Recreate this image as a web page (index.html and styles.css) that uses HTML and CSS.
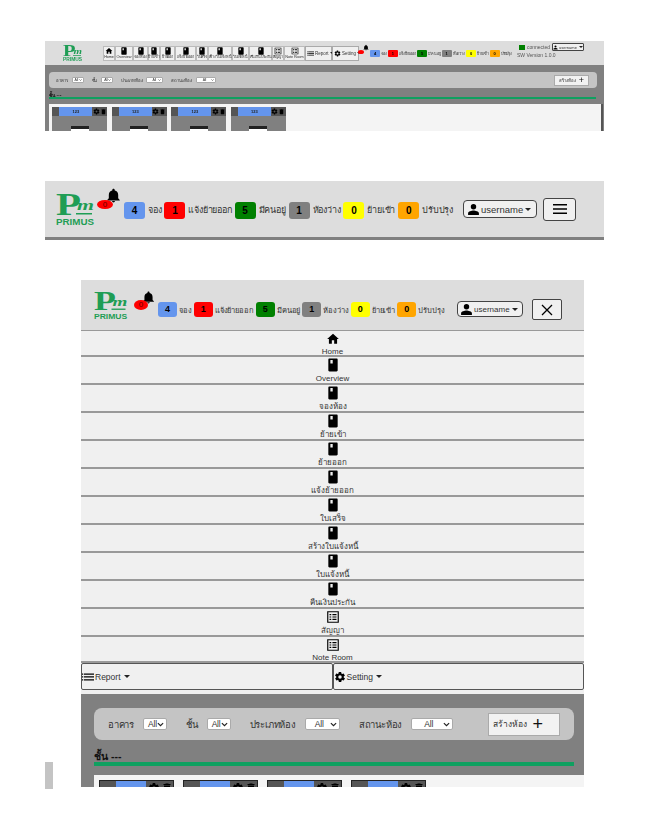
FILE: index.html
```html
<!DOCTYPE html>
<html lang="en">
<head>
    <meta charset="UTF-8">
    <meta name="viewport" content="width=device-width, initial-scale=1.0">
    <title>Primus manual</title>
    <link rel="stylesheet" href="styles.css">
</head>
<body>
    <svg class="defs" width="0" height="0">
        <symbol id="i-home" viewBox="0 0 24 24"><path d="M10 20v-6h4v6h5v-8h3L12 3 2 12h3v8z"/></symbol>
        <symbol id="i-book" viewBox="0 0 24 24"><path fill-rule="evenodd" d="M6 1h12c1.400 0 2 .8 2 2v18c0 1.200-.6 2-2 2H6c-1.400 0-2-.8-2-2V3c0-1.200.6-2 2-2zm1.500 2.500v6h4v-6z"/></symbol>
        <symbol id="i-list" viewBox="0 0 24 24"><path fill-rule="evenodd" d="M2 2h20v20H2zm2 2v16h16V4zm2 3h3v2H6zm5 0h7v2h-7zm-5 4h3v2H6zm5 0h7v2h-7zm-5 4h3v2H6zm5 0h7v2h-7z"/></symbol>
        <symbol id="i-menu" viewBox="0 0 24 24"><path d="M0 5h2.500v2.500H0zm4 0h20v2.500H4zm-4 5.700h2.500v2.500H0zm4 0h20v2.500H4zm-4 5.800h2.500V19H0zm4 0h20V19H4z"/></symbol>
        <symbol id="i-gear" viewBox="0 0 24 24"><path d="M19.400 13c0-.3.1-.6.1-1s0-.7-.1-1l2.100-1.600c.2-.2.2-.4.100-.6l-2-3.500c-.1-.2-.4-.3-.6-.2l-2.500 1c-.5-.4-1.100-.7-1.700-1l-.4-2.600c0-.3-.2-.5-.5-.5h-4c-.3 0-.5.2-.5.400l-.4 2.700c-.6.200-1.200.6-1.700 1l-2.500-1c-.2-.1-.5 0-.6.2l-2 3.500c-.1.200-.1.400.1.600L4.600 11c0 .3-.1.600-.1 1s0 .7.1 1l-2.100 1.600c-.2.200-.2.400-.1.600l2 3.500c.1.200.4.300.6.200l2.500-1c.5.400 1.100.7 1.700 1l.4 2.600c0 .3.200.5.500.5h4c.3 0 .5-.2.500-.4l.4-2.700c.6-.2 1.200-.6 1.700-1l2.500 1c.2.100.5 0 .6-.2l2-3.500c.1-.2.100-.4-.1-.6zM12 15.500a3.500 3.500 0 1 1 0-7 3.500 3.500 0 0 1 0 7z"/></symbol>
        <symbol id="i-trash" viewBox="0 0 24 24"><path d="M6 19c0 1.100.9 2 2 2h8c1.100 0 2-.9 2-2V7H6zM19 4h-3.500l-1-1h-5l-1 1H5v2h14z"/></symbol>
        <symbol id="i-person" viewBox="0 0 24 24"><path d="M12 12a5 5 0 1 0 0-10 5 5 0 0 0 0 10zm0 2c-3.300 0-10 1.700-10 5v3h20v-3c0-3.300-6.700-5-10-5z"/></symbol>
        <symbol id="i-bell" viewBox="0 0 24 24"><path d="M12 23c1.300 0 2.300-1 2.300-2.200H9.700C9.700 22 10.700 23 12 23zm7.500-6.500V11c0-3.600-2-6.300-5.500-7.100v-.8C14 2 13.100 1 12 1s-2 1-2 2.100v.8C6.500 4.700 4.500 7.400 4.500 11v5.500L2 19v1h20v-1z"/></symbol>
        <symbol id="i-chev" viewBox="0 0 12 8"><path d="M1.500 1.500L6 6l4.500-4.500" fill="none" stroke="#222" stroke-width="2"/></symbol>
        <symbol id="i-logo" viewBox="0 0 40 33">
            <text class="logo-p" x="0" y="22" textLength="25" lengthAdjust="spacingAndGlyphs">P</text>
            <text class="logo-m" x="21" y="17" textLength="17" lengthAdjust="spacingAndGlyphs">m</text>
            <rect class="logo-bar" x="20" y="20" width="16" height="1.500"/>
            <text class="logo-name" x="0" y="32" textLength="38" lengthAdjust="spacingAndGlyphs">PRIMUS</text>
        </symbol>
    </svg>

    <!-- full page, small -->
    <section class="shot shot-small">
        <header class="tiny-head">
            <svg class="tiny-logo"><use href="#i-logo"/></svg>
            <nav class="tiny-nav">
                <a class="w12"><svg><use href="#i-home"/></svg>Home</a>
                <a class="w18"><svg><use href="#i-book"/></svg>Overview</a>
                <a class="w15"><svg><use href="#i-book"/></svg>จองห้อง</a>
                <a class="w12"><svg><use href="#i-book"/></svg>ย้ายเข้า</a>
                <a class="w15"><svg><use href="#i-book"/></svg>ย้ายออก</a>
                <a class="w21"><svg><use href="#i-book"/></svg>แจ้งย้ายออก</a>
                <a class="w12"><svg><use href="#i-book"/></svg>ใบเสร็จ</a>
                <a class="w24"><svg><use href="#i-book"/></svg>สร้างใบแจ้งหนี้</a>
                <a class="w17"><svg><use href="#i-book"/></svg>ใบแจ้งหนี้</a>
                <a class="w23"><svg><use href="#i-book"/></svg>คืนเงินประกัน</a>
                <a class="w12"><svg><use href="#i-list"/></svg>สัญญา</a>
                <a class="w21"><svg><use href="#i-list"/></svg>Note Room</a>
            </nav>
            <button class="tiny-drop"><svg><use href="#i-menu"/></svg>Report <i class="caret"></i></button>
            <button class="tiny-drop"><svg><use href="#i-gear"/></svg>Setting <i class="caret"></i></button>
            <div class="bell tiny-bell">
                <svg><use href="#i-bell"/></svg>
                <span class="bell-count"></span>
            </div>
            <ul class="stats tiny-stats">
                <li><b class="blue">4</b>จอง</li>
                <li><b class="red">1</b>แจ้งย้ายออก</li>
                <li><b class="green">5</b>มีคนอยู่</li>
                <li><b class="grey">1</b>ห้องว่าง</li>
                <li><b class="yellow">0</b>ย้ายเข้า</li>
                <li><b class="orange">0</b>ปรับปรุง</li>
            </ul>
            <div class="tiny-status">
                <div class="tiny-conn">
                    <i class="folder"></i>connected
                    <span class="user-btn"><svg><use href="#i-person"/></svg>username <i class="caret"></i></span>
                </div>
                <div class="version">SW Version 1.0.0</div>
            </div>
        </header>
        <main class="tiny-main">
            <div class="filters">
                <label>อาคาร</label><span class="sel s1">All<svg><use href="#i-chev"/></svg></span>
                <label>ชั้น</label><span class="sel s1">All<svg><use href="#i-chev"/></svg></span>
                <label>ประเภทห้อง</label><span class="sel s2">All<svg><use href="#i-chev"/></svg></span>
                <label>สถานะห้อง</label><span class="sel s3">All<svg><use href="#i-chev"/></svg></span>
                <button class="add-room">สร้างห้อง <span>+</span></button>
            </div>
            <h2>ชั้น ---</h2>
            <div class="rooms">
                <div class="room"><div class="room-head"><i class="room-tag"></i><span class="room-no">123</span><svg><use href="#i-gear"/></svg><svg><use href="#i-trash"/></svg></div><div class="room-body"><i></i></div></div>
                <div class="room"><div class="room-head"><i class="room-tag"></i><span class="room-no">123</span><svg><use href="#i-gear"/></svg><svg><use href="#i-trash"/></svg></div><div class="room-body"><i></i></div></div>
                <div class="room"><div class="room-head"><i class="room-tag"></i><span class="room-no">123</span><svg><use href="#i-gear"/></svg><svg><use href="#i-trash"/></svg></div><div class="room-body"><i></i></div></div>
                <div class="room"><div class="room-head"><i class="room-tag"></i><span class="room-no">123</span><svg><use href="#i-gear"/></svg><svg><use href="#i-trash"/></svg></div><div class="room-body"><i></i></div></div>
            </div>
        </main>
    </section>

    <!-- header with menu closed -->
    <section class="shot shot-bar">
        <svg class="bar-logo"><use href="#i-logo"/></svg>
        <div class="bell bar-bell">
            <svg><use href="#i-bell"/></svg>
            <span class="bell-count">0</span>
        </div>
        <ul class="stats bar-stats">
            <li><b class="blue">4</b>จอง</li>
            <li><b class="red">1</b>แจ้งย้ายออก</li>
            <li><b class="green">5</b>มีคนอยู่</li>
            <li><b class="grey">1</b>ห้องว่าง</li>
            <li><b class="yellow">0</b>ย้ายเข้า</li>
            <li><b class="orange">0</b>ปรับปรุง</li>
        </ul>
        <span class="user-btn"><svg><use href="#i-person"/></svg>username <i class="caret"></i></span>
        <button class="toggle">
            <svg viewBox="0 0 16 16"><path d="M1 3h14v1.500H1zm0 4.300h14v1.500H1zm0 4.200h14V13H1z"/></svg>
        </button>
    </section>

    <div class="row-open">
        <div class="strip"></div>

        <!-- mobile width with menu open -->
        <section class="shot shot-open">
            <header class="open-head">
                <svg class="open-logo"><use href="#i-logo"/></svg>
                <div class="bell open-bell">
                    <svg><use href="#i-bell"/></svg>
                    <span class="bell-count">0</span>
                </div>
                <ul class="stats open-stats">
                    <li><b class="blue">4</b>จอง</li>
                    <li><b class="red">1</b>แจ้งย้ายออก</li>
                    <li><b class="green">5</b>มีคนอยู่</li>
                    <li><b class="grey">1</b>ห้องว่าง</li>
                    <li><b class="yellow">0</b>ย้ายเข้า</li>
                    <li><b class="orange">0</b>ปรับปรุง</li>
                </ul>
                <span class="user-btn"><svg><use href="#i-person"/></svg>username <i class="caret"></i></span>
                <button class="toggle close-btn">
                    <svg viewBox="0 0 16 16"><path d="M3 3l10 10M13 3L3 13" fill="none" stroke="#000" stroke-width="1.300"/></svg>
                </button>
            </header>
            <nav class="menu">
                <a class="first"><svg><use href="#i-home"/></svg>Home</a>
                <a><svg class="tall"><use href="#i-book"/></svg>Overview</a>
                <a><svg class="tall"><use href="#i-book"/></svg>จองห้อง</a>
                <a><svg class="tall"><use href="#i-book"/></svg>ย้ายเข้า</a>
                <a><svg class="tall"><use href="#i-book"/></svg>ย้ายออก</a>
                <a><svg class="tall"><use href="#i-book"/></svg>แจ้งย้ายออก</a>
                <a><svg class="tall"><use href="#i-book"/></svg>ใบเสร็จ</a>
                <a><svg class="tall"><use href="#i-book"/></svg>สร้างใบแจ้งหนี้</a>
                <a><svg class="tall"><use href="#i-book"/></svg>ใบแจ้งหนี้</a>
                <a><svg class="tall"><use href="#i-book"/></svg>คืนเงินประกัน</a>
                <a><svg class="tall"><use href="#i-list"/></svg>สัญญา</a>
                <a class="last"><svg><use href="#i-list"/></svg>Note Room</a>
                <div class="menu-drops">
                    <button><svg><use href="#i-menu"/></svg>Report <i class="caret"></i></button>
                    <button><svg><use href="#i-gear"/></svg>Setting <i class="caret"></i></button>
                </div>
            </nav>
            <main class="open-main">
                <div class="filters">
                    <label>อาคาร</label><span class="sel s1">All<svg><use href="#i-chev"/></svg></span>
                    <label>ชั้น</label><span class="sel s1">All<svg><use href="#i-chev"/></svg></span>
                    <label>ประเภทห้อง</label><span class="sel s2">All<svg><use href="#i-chev"/></svg></span>
                    <label>สถานะห้อง</label><span class="sel s3">All<svg><use href="#i-chev"/></svg></span>
                    <button class="add-room">สร้างห้อง <span>+</span></button>
                </div>
                <h2>ชั้น ---</h2>
                <div class="rooms">
                    <div class="room"><div class="room-head"><i class="room-tag"></i><span class="room-no"></span><svg><use href="#i-gear"/></svg><svg><use href="#i-trash"/></svg></div></div>
                    <div class="room"><div class="room-head"><i class="room-tag"></i><span class="room-no"></span><svg><use href="#i-gear"/></svg><svg><use href="#i-trash"/></svg></div></div>
                    <div class="room"><div class="room-head"><i class="room-tag"></i><span class="room-no"></span><svg><use href="#i-gear"/></svg><svg><use href="#i-trash"/></svg></div></div>
                    <div class="room"><div class="room-head"><i class="room-tag"></i><span class="room-no"></span><svg><use href="#i-gear"/></svg><svg><use href="#i-trash"/></svg></div></div>
                </div>
            </main>
        </section>
    </div>
</body>
</html>
```

FILE: styles.css
```css
* {
    box-sizing: border-box;
}
body {
    margin: 0;
    padding: 41px 0 0 45px;
    width: 604px;
    background-color: #fff;
    font-family: "Liberation Sans", "Noto Sans", "DejaVu Sans", sans-serif;
    color: #333;
}
.defs {
    display: block;
    height: 0;
}
ul {
    list-style: none;
    margin: 0;
    padding: 0;
}
button {
    font-family: inherit;
    color: #333;
}
.shot {
    overflow: hidden;
}
.logo-p {
    font: bold 32px "Liberation Serif", serif;
    fill: #1f9d55;
}
.logo-m {
    font: italic bold 15px "Liberation Serif", serif;
    fill: #1f9d55;
}
.logo-bar {
    fill: #1f9d55;
}
.logo-name {
    font: bold 9px "Liberation Sans", sans-serif;
    fill: #1f9d55;
}
.caret {
    display: inline-block;
    border: 3.500px solid transparent;
    border-top-color: #222;
    border-bottom: 0;
    vertical-align: middle;
}

/* stat badges */
.stats {
    display: flex;
    align-items: center;
    flex: none;
    white-space: nowrap;
}
.stats li {
    display: flex;
    align-items: center;
}
.stats b {
    display: block;
    text-align: center;
    color: #000;
    letter-spacing: 0;
}
.blue { background-color: #6495ed; }
.red { background-color: #f00; }
.green { background-color: #008000; }
.grey { background-color: #808080; }
.yellow { background-color: #ff0; }
.orange { background-color: #ffa500; }

.bell {
    position: relative;
}
.bell svg {
    display: block;
    width: 100%;
    height: 100%;
}
.bell-count {
    position: absolute;
    background-color: #f00;
    border-radius: 50%;
    text-align: center;
    color: #600;
}
.user-btn {
    display: flex;
    align-items: center;
    background-color: #f0f0f0;
    border: 1px solid #444;
    border-radius: 4px;
    color: #333;
}

/* filter bar and rooms, shared */
.filters {
    display: flex;
    align-items: center;
    background-color: #c4c4c4;
    white-space: nowrap;
}
.sel {
    display: flex;
    align-items: center;
    justify-content: space-between;
    flex: none;
    background-color: #fff;
    border: 1px solid #aaa;
    border-radius: 2px;
    color: #333;
}
.add-room {
    display: flex;
    align-items: center;
    justify-content: space-between;
    margin-left: auto;
    background-color: #f2f2f2;
    border: 1px solid #aaa;
    white-space: nowrap;
}
.rooms {
    display: flex;
    background-color: #f4f4f4;
}
.room {
    background-color: #808080;
}
.room-head {
    display: flex;
    align-items: center;
    justify-content: space-between;
    background-color: #555;
    border: 1px solid #222;
}
.room-no {
    display: block;
    background-color: #6495ed;
    color: #222;
    text-align: center;
}
.room-tag {
    display: block;
}

/* shot 1 */
.shot-small {
    height: 90px;
    background-color: #808080;
    filter: blur(0.35px);
}
.tiny-head {
    display: flex;
    align-items: center;
    height: 24px;
    padding-left: 18px;
    background-color: #ddd;
}
.tiny-logo {
    flex: none;
    width: 20px;
    height: 17px;
    margin-right: 20px;
}
.tiny-nav {
    display: flex;
    flex: none;
}
.tiny-nav a {
    display: flex;
    flex-direction: column;
    align-items: center;
    justify-content: center;
    height: 15px;
    border: 1px solid #bbb;
    background-color: #f0f0f0;
    font-size: 3.800px;
    line-height: 5px;
    letter-spacing: -0.1px;
    white-space: nowrap;
}
.tiny-nav svg {
    width: 8px;
    height: 8px;
    flex: none;
}
.w12 { width: 12px; }
.w15 { width: 15px; }
.w17 { width: 17px; }
.w18 { width: 18px; }
.w21 { width: 21px; }
.w23 { width: 23px; }
.w24 { width: 24px; }
.tiny-drop {
    flex: none;
    display: flex;
    align-items: center;
    width: 27px;
    height: 15px;
    padding: 0 1px;
    gap: 1px;
    border: 1px solid #aaa;
    background-color: #f0f0f0;
    font-size: 4.500px;
    white-space: nowrap;
}
.tiny-drop svg {
    width: 7px;
    height: 7px;
    flex: none;
}
.tiny-drop .caret {
    border-width: 2px;
    border-bottom: 0;
}
.tiny-bell {
    flex: none;
    align-self: flex-start;
    width: 6px;
    height: 7px;
    margin: 3px 0 0 4px;
}
.tiny-bell .bell-count {
    left: -5px;
    top: 6px;
    width: 6px;
    height: 4px;
}
.tiny-stats {
    margin: 1px 0 0 1px;
    font-size: 3.800px;
    letter-spacing: -0.08px;
    color: #333;
}
.tiny-stats li {
    margin-right: 1px;
}
.tiny-stats b {
    width: 10px;
    height: 7px;
    margin-right: 1px;
    border-radius: 1px;
    font-size: 4px;
    line-height: 7px;
}
.tiny-status {
    flex: none;
    margin: 0 21px 0 auto;
    align-self: flex-start;
    padding-top: 2px;
    width: 66px;
    font-size: 5px;
    color: #555;
}
.tiny-conn {
    display: flex;
    align-items: center;
    padding-left: 2px;
    white-space: nowrap;
}
.folder {
    flex: none;
    width: 6px;
    height: 5px;
    margin-right: 2px;
    background-color: #008000;
}
.tiny-conn .user-btn {
    flex: none;
    width: 32px;
    height: 8px;
    margin-left: 2px;
    font-size: 4px;
    border-radius: 1px;
}
.tiny-conn .user-btn svg {
    width: 5px;
    height: 5px;
}
.tiny-conn .caret {
    border-width: 2px;
    border-bottom: 0;
    margin-left: 1px;
}
.version {
    margin-top: 1px;
    white-space: nowrap;
}
.tiny-main {
    padding: 7px 1px 0 4px;
}
.tiny-main .filters {
    width: 548px;
    height: 16px;
    padding: 0 8px 0 7px;
    border-radius: 4px;
    font-size: 4.300px;
    letter-spacing: -0.1px;
}
.tiny-main .sel {
    height: 6px;
    margin: 0 8px 0 4px;
    padding: 0 1px 0 2px;
    font-size: 3.500px;
    border-radius: 1px;
}
.tiny-main .sel svg {
    width: 3px;
    height: 2px;
    flex: none;
}
.tiny-main .s1 { width: 12px; }
.tiny-main .s2 { width: 17px; padding-left: 5px; }
.tiny-main .s3 { width: 20px; padding-left: 6px; }
.tiny-main .add-room {
    width: 35px;
    height: 11px;
    padding: 0 4px;
    font-size: 4.300px;
}
.tiny-main .add-room span {
    font-size: 9px;
    line-height: 9px;
    color: #111;
}
.tiny-main h2 {
    margin: 0;
    height: 11px;
    padding-top: 4px;
    font-size: 5px;
    line-height: 6px;
    color: #111;
}
.tiny-main h2::after {
    content: "";
    display: block;
    width: 547px;
    height: 2px;
    margin-top: -1px;
    background-color: #0fa060;
}
.tiny-main .rooms {
    margin-top: 5px;
    padding: 3px 3px 0;
    gap: 4.500px;
    height: 30px;
    border-right: 2px solid #555;
}
.tiny-main .room {
    width: 55px;
}
.tiny-main .room-head {
    height: 9px;
    padding-left: 7px;
    border: 0;
    background-color: #555;
}
.tiny-main .room-no {
    width: 33px;
    height: 9px;
    font-size: 4px;
    line-height: 9px;
    font-weight: bold;
}
.tiny-main .room-head svg {
    width: 7px;
    height: 7px;
    flex: none;
}
.room-body {
    padding-top: 10px;
}
.room-body i {
    display: block;
    width: 18px;
    height: 10px;
    margin: 0 auto;
    background-color: #fff;
    border-top: 3px solid #222;
}

/* shot 2 */
.shot-bar {
    display: flex;
    align-items: center;
    height: 59px;
    margin-top: 50px;
    padding: 0 28px 0 11px;
    background-color: #ddd;
    border-bottom: 3px solid #808080;
}
.bar-logo {
    flex: none;
    width: 40px;
    height: 33px;
}
.bar-bell {
    flex: none;
    align-self: flex-start;
    width: 15px;
    height: 15px;
    margin: 7px 0 0 10px;
}
.bar-bell .bell-count {
    left: -9px;
    top: 12px;
    width: 16px;
    height: 9px;
    font-size: 8px;
    line-height: 9px;
}
.bar-stats {
    margin: 2px 0 0 3px;
    font-size: 9px;
    letter-spacing: -0.2px;
    color: #333;
}
.bar-stats li {
    margin-right: 3px;
}
.bar-stats b {
    width: 21px;
    height: 17px;
    margin-right: 3px;
    border-radius: 3px;
    font-size: 10px;
    line-height: 17px;
}
.shot-bar .user-btn {
    flex: none;
    width: 74px;
    height: 18px;
    margin-left: auto;
    padding: 0 5px 0 3px;
    font-size: 9.500px;
}
.user-btn svg {
    width: 13px;
    height: 13px;
    flex: none;
    margin-right: 1px;
}
.user-btn .caret {
    margin-left: auto;
}
.toggle {
    flex: none;
    display: flex;
    align-items: center;
    justify-content: center;
    width: 33px;
    height: 23px;
    margin-left: 6px;
    padding: 0;
    background-color: #f0f0f0;
    border: 1px solid #444;
    border-radius: 3px;
}
.toggle svg {
    width: 16px;
    height: 16px;
}

/* shot 3 */
.row-open {
    display: flex;
    margin-top: 40px;
}
.strip {
    flex: none;
    align-self: flex-end;
    width: 8px;
    height: 27px;
    margin-right: 28px;
    background-color: #c4c4c4;
}
.shot-open {
    width: 503px;
    height: 507px;
    margin-bottom: 2px;
    background-color: #808080;
}
.open-head {
    display: flex;
    align-items: center;
    height: 51px;
    padding: 0 22px 0 13px;
    background-color: #ddd;
    border-bottom: 1px solid #999;
}
.open-logo {
    flex: none;
    width: 35px;
    height: 29px;
}
.open-bell {
    flex: none;
    align-self: flex-start;
    width: 13px;
    height: 13px;
    margin: 11px 0 0 13px;
}
.open-bell .bell-count {
    left: -8px;
    top: 9px;
    width: 14px;
    height: 10px;
    font-size: 8px;
    line-height: 10px;
}
.open-stats {
    margin: 9px 0 0 3px;
    font-size: 7.600px;
    letter-spacing: -0.1px;
    color: #333;
}
.open-stats li {
    margin-right: 2px;
}
.open-stats b {
    width: 19px;
    height: 15px;
    margin-right: 2px;
    border-radius: 3px;
    font-size: 9px;
    line-height: 15px;
}
.open-head .user-btn {
    flex: none;
    width: 66px;
    height: 16px;
    margin: 8px 0 0 auto;
    padding: 0 4px 0 2px;
    font-size: 8px;
}
.close-btn {
    width: 30px;
    height: 21px;
    margin: 9px 0 0 9px;
    border-radius: 2px;
}
.menu a {
    display: flex;
    flex-direction: column;
    align-items: center;
    justify-content: flex-start;
    height: 28px;
    padding-top: 1px;
    background-color: #f0f0f0;
    border-bottom: 2px solid #999;
    font-size: 8px;
    line-height: 10px;
    color: #333;
    white-space: nowrap;
}
.menu a.first {
    height: 26px;
}
.menu a.last {
    height: 26px;
}
.menu a svg {
    flex: none;
    width: 14px;
    height: 14px;
    margin-bottom: 1px;
}
.menu a svg.tall {
    margin-bottom: 2px;
}
.menu-drops {
    display: flex;
    height: 31px;
    padding-bottom: 4px;
    background-color: #f0f0f0;
}
.menu-drops button {
    flex: 1;
    display: flex;
    align-items: center;
    gap: 0;
    padding: 0;
    font-size: 8.500px;
    background-color: #f0f0f0;
    border: 1px solid #555;
    border-radius: 2px;
}
.menu-drops svg {
    width: 12px;
    height: 12px;
    margin-right: 1px;
}
.menu-drops .caret {
    margin-left: 3px;
}
.open-main {
    padding: 14px 0 0 13px;
}
.open-main .filters {
    width: 480px;
    height: 32px;
    padding: 0 14px;
    border-radius: 8px;
    font-size: 9.500px;
    letter-spacing: -0.2px;
}
.open-main .sel {
    height: 12px;
    margin: 0 19px 0 9px;
    padding: 0 2px 0 4px;
    font-size: 8.500px;
}
.open-main .sel svg {
    width: 7px;
    height: 5px;
    flex: none;
}
.open-main .s1 { width: 24px; }
.open-main .s2 { width: 35px; padding-left: 9px; }
.open-main .s3 { width: 42px; padding-left: 12px; }
.open-main .add-room {
    width: 72px;
    height: 23px;
    padding: 0 16px 0 4px;
    font-size: 8.500px;
}
.open-main .add-room span {
    font-size: 18px;
    line-height: 18px;
    color: #111;
}
.open-main h2 {
    margin: 0;
    padding-top: 10px;
    font-size: 10.500px;
    line-height: 12px;
    color: #111;
}
.open-main h2::after {
    content: "";
    display: block;
    width: 480px;
    height: 4px;
    background-color: #0fa060;
}
.open-main .rooms {
    margin-top: 9px;
    padding: 5px 5px 0;
    gap: 9px;
    height: 20px;
}
.open-main .room {
    width: 75px;
}
.open-main .room-head {
    height: 15px;
}
.open-main .room-tag {
    width: 15px;
}
.open-main .room-no {
    width: 30px;
    height: 14px;
}
.open-main .room-head svg {
    width: 12px;
    height: 12px;
    flex: none;
}
```
